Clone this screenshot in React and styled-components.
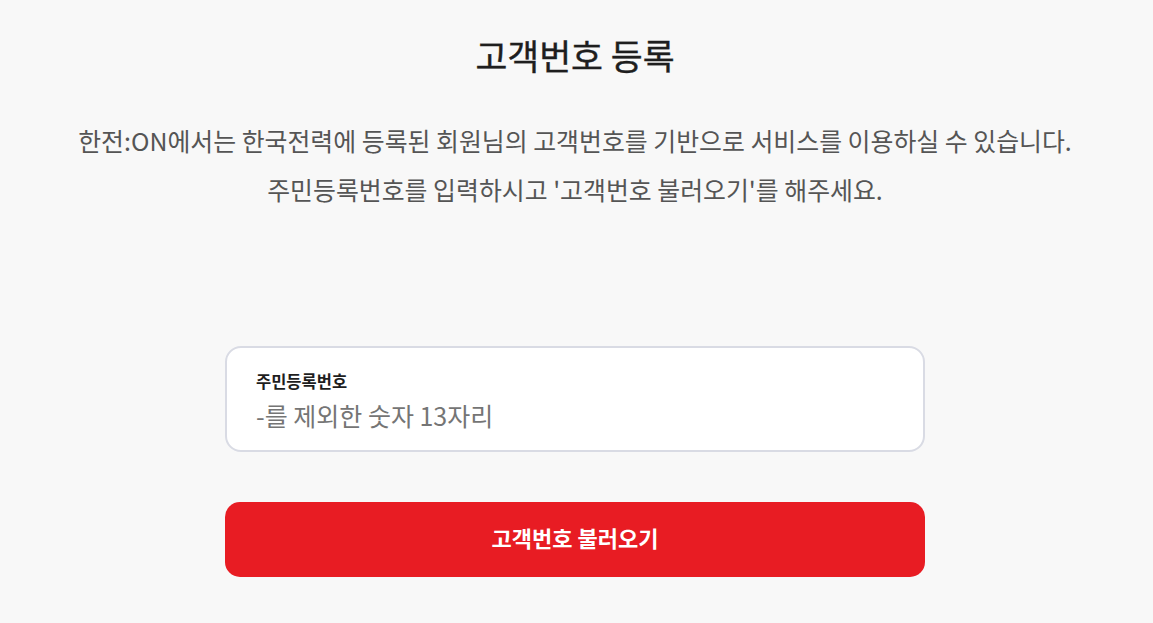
import * as React from "react";
import styled, { createGlobalStyle } from "styled-components";

const GlobalStyle = createGlobalStyle`
  html, body {
    margin: 0;
    padding: 0;
    background: #f8f8f8;
    font-family: "Noto Sans CJK KR", "Noto Sans", sans-serif;
  }
`;

const Page = styled.main`
  display: flex;
  flex-direction: column;
  align-items: center;
  padding: 31px 3px 0 0;
  min-height: 623px;
  box-sizing: border-box;
`;

const Title = styled.h1`
  margin: 0;
  font-size: 34.7px;
  line-height: 48px;
  font-weight: 400;
  color: #1e1e1e;
  -webkit-text-stroke: 0.4px #1e1e1e;
`;

const Intro = styled.p`
  margin: 37px 0 0;
  font-size: 24.9px;
  line-height: 49px;
  font-weight: 400;
  color: #555;
  text-align: center;
`;

const Form = styled.form`
  width: 700px;
  margin-top: 132px;
  display: flex;
  flex-direction: column;
  gap: 50px;
`;

const Field = styled.label`
  display: flex;
  flex-direction: column;
  height: 106px;
  box-sizing: border-box;
  padding: 21px 29px 0;
  background: #fff;
  border: 2px solid #d9dbe4;
  border-radius: 16px;
`;

const FieldLabel = styled.span`
  font-size: 16.5px;
  line-height: 24px;
  font-weight: 700;
  color: #1e1e1e;
`;

const Input = styled.input`
  margin-top: 3px;
  border: 0;
  outline: none;
  padding: 0;
  background: transparent;
  font-family: inherit;
  font-size: 25px;
  line-height: 38px;
  height: 38px;
  color: #222;

  ::placeholder {
    color: #666;
  }
`;

const Submit = styled.button`
  height: 75px;
  padding: 0 0 6px;
  border: 0;
  border-radius: 15px;
  background: #e81c23;
  color: #fff;
  font-family: inherit;
  font-size: 22px;
  font-weight: 700;
  cursor: pointer;
`;

const App = () => (
  <>
    <GlobalStyle />
    <Page>
      <Title>고객번호 등록</Title>
      <Intro>
        한전:ON에서는 한국전력에 등록된 회원님의 고객번호를 기반으로 서비스를 이용하실 수 있습니다.
        <br />
        주민등록번호를 입력하시고 '고객번호 불러오기'를 해주세요.
      </Intro>
      <Form onSubmit={(e) => e.preventDefault()}>
        <Field>
          <FieldLabel>주민등록번호</FieldLabel>
          <Input type="text" placeholder="-를 제외한 숫자 13자리" />
        </Field>
        <Submit type="submit">고객번호 불러오기</Submit>
      </Form>
    </Page>
  </>
);

export default App;
